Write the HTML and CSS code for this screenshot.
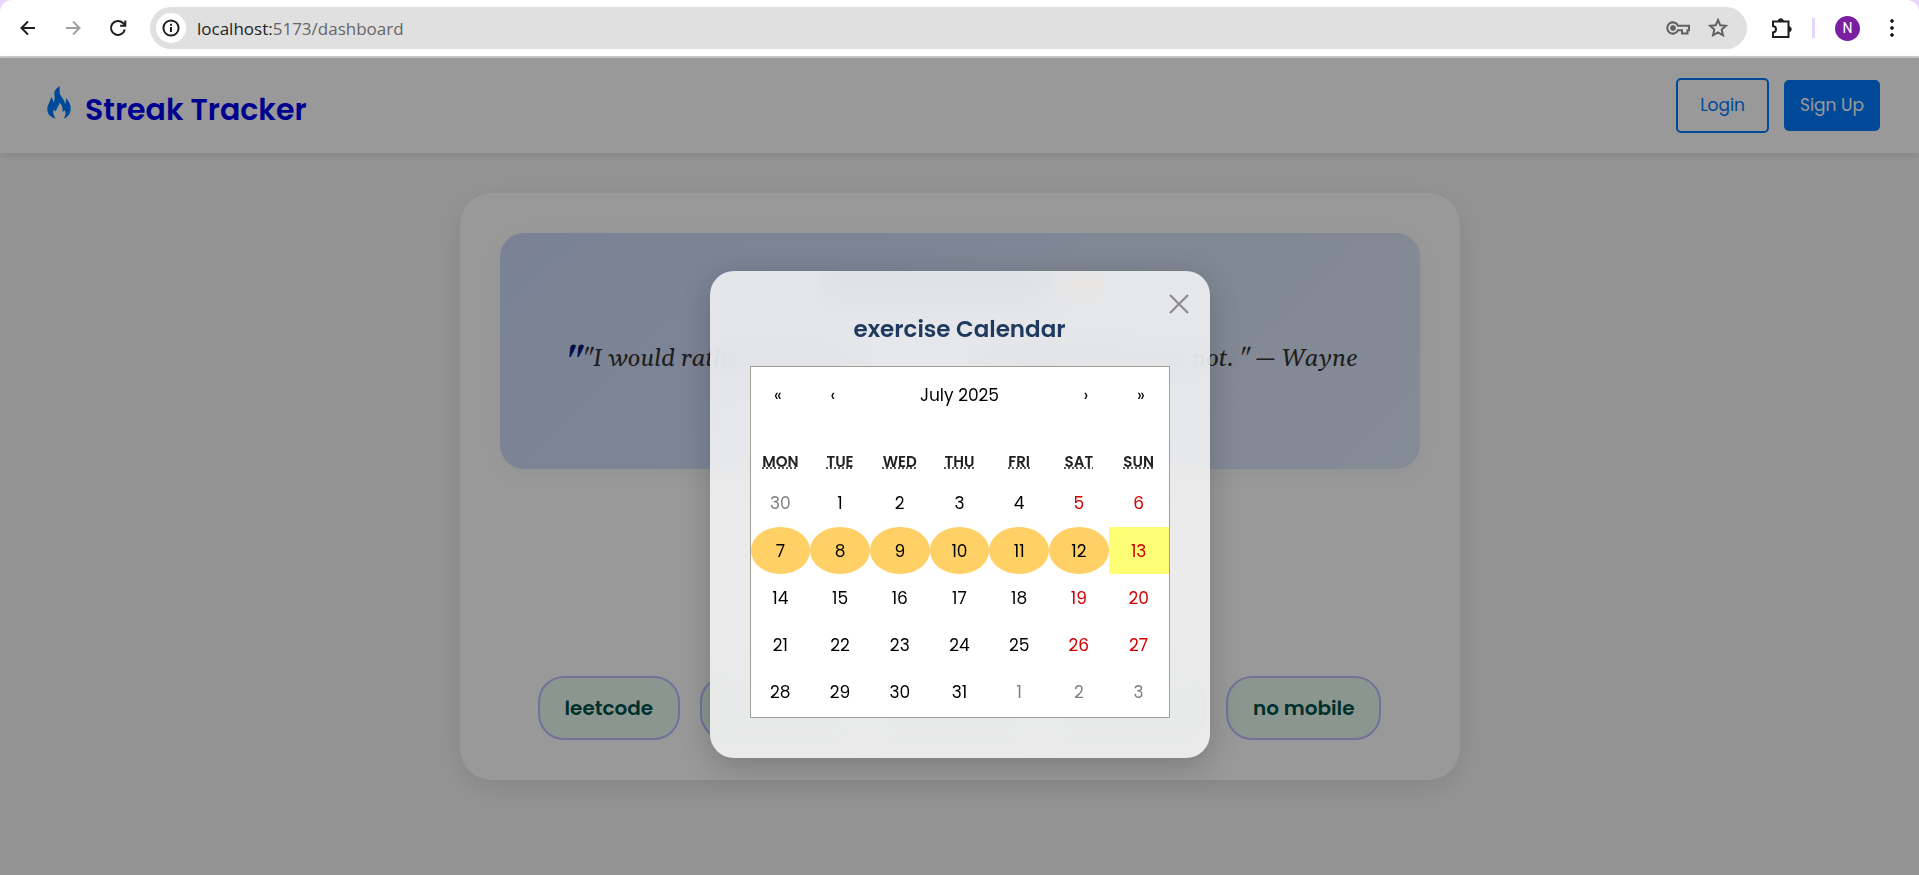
FILE: index.html
```html
<!DOCTYPE html>
<html lang="en">
<head>
<meta charset="utf-8">
<title>Streak Tracker</title>
<meta name="viewport" content="width=device-width, initial-scale=1">
<link rel="stylesheet" href="styles.css">
</head>
<body>
<div class="browser">
  <div class="toolbar">
    <div class="nav-buttons">
      <button class="tool" aria-label="Back"><svg viewBox="0 0 20 20"><path d="M17 10H4M10 3.5L3.5 10l6.500 6.500"/></svg></button>
      <button class="tool tool-off" aria-label="Forward"><svg viewBox="0 0 20 20"><path d="M3 10h13M10 3.500L16.500 10 10 16.500"/></svg></button>
      <button class="tool" aria-label="Reload"><svg viewBox="0 0 20 20"><path d="M16.800 11.500A7 7 0 1 1 15 5l2 2"/><path d="M17.300 2.500v5.200h-5.200"/></svg></button>
    </div>
    <div class="address">
      <button class="site-info" aria-label="Site information"><svg viewBox="0 0 20 20"><circle cx="10" cy="10" r="7.600"/><path d="M10 9v5M10 5.700v2"/></svg></button>
      <div class="url"><span class="host">localhost:</span>5173/dashboard</div>
      <button class="tool tool-mid key" aria-label="Passwords"><svg viewBox="0 0 24 20"><path d="M12 7.800A5.600 5.600 0 1 0 12 12.200h4V15.500h5.500V12.200h1.500V7.800z"/><circle class="solid" cx="7" cy="10" r="2.400"/></svg></button>
      <button class="tool tool-mid" aria-label="Bookmark this page"><svg viewBox="0 0 20 20"><path d="M10 2l2.300 5.300 5.700.5-4.300 3.800 1.300 5.700L10 14.300l-5 3 1.300-5.700L2 7.800l5.700-.5z"/></svg></button>
    </div>
    <div class="tools">
      <button class="tool puzzle" aria-label="Extensions"><svg viewBox="0 0 24 24"><path d="M4 5.500h15.500v15.500H4v-4.500c4-.5 4-6 0-6.500z"/><path class="solid" d="M9 5a2.800 2.800 0 0 1 5.500 0zM20 10.500a2.800 2.800 0 0 1 0 5.500z"/></svg></button>
      <span class="divider"></span>
      <button class="avatar" aria-label="Profile">N</button>
      <button class="tool menu" aria-label="Menu"><svg viewBox="0 0 20 20"><circle class="solid" cx="10" cy="3" r="1.400"/><circle class="solid" cx="10" cy="10" r="1.400"/><circle class="solid" cx="10" cy="17" r="1.400"/></svg></button>
    </div>
  </div>

  <div class="viewport">
    <header class="site-header">
      <a class="brand" href="#">
        <svg class="flame" viewBox="0 0 24 34"><path d="M12.500 0C13 5 12 7 14 10c1.500 2.200 3.500 4.500 4 8 1-1.500 1.200-3.500.8-6C22 15 24 19 23.700 23c-.3 5-3 8.500-7 9.500 2.200-3 2.300-5.500 1-8.500-.5 1-1.200 1.500-2.200 1.800.5-4-.5-7-3.300-9.300.3 3.500-2.700 5-3.200 9-1-.5-1.700-1.200-2-2.500-1.500 3.500-.8 6.500 1.800 9.500C3.500 31.500.3 28 .3 23 .2 18.500 3.500 16 4 11c1.700 1.800 2.300 3.300 2.300 5.500C9.500 12.500 6 8 8 4.500 9 2.500 11 1.500 12.500 0z"/></svg>
        <span>Streak Tracker</span>
      </a>
      <nav class="account">
        <a class="btn btn-outline" href="#">Login</a>
        <a class="btn btn-solid" href="#">Sign Up</a>
      </nav>
    </header>

    <main class="card">
      <section class="quote-box">
        <div class="quote-head"><span class="bar"></span><span class="dot"></span></div>
        <blockquote class="quote">
          <span><span class="mark">"</span>"I would rather be hated</span>
          <span>loved for who I am not. " — Wayne</span>
        </blockquote>
      </section>
      <div class="habits">
        <button class="habit">leetcode</button>
        <span class="habit habit-rest"></span>
        <span class="habit habit-rest"></span>
        <span class="habit habit-rest"></span>
        <button class="habit">no mobile</button>
      </div>
    </main>

    <div class="overlay">
      <div class="modal" role="dialog" aria-labelledby="modal-title">
        <button class="close" aria-label="Close"><svg viewBox="0 0 20 20"><path d="M1 1l18 18M19 1L1 19"/></svg></button>
        <h2 class="modal-title" id="modal-title">exercise Calendar</h2>
        <div class="calendar">
          <div class="cal-nav">
            <button>«</button><button>‹</button>
            <button class="cal-label">July 2025</button>
            <button>›</button><button>»</button>
          </div>
          <table class="cal-grid">
            <thead><tr>
              <th><abbr title="Monday">MON</abbr></th><th><abbr title="Tuesday">TUE</abbr></th><th><abbr title="Wednesday">WED</abbr></th><th><abbr title="Thursday">THU</abbr></th><th><abbr title="Friday">FRI</abbr></th><th><abbr title="Saturday">SAT</abbr></th><th><abbr title="Sunday">SUN</abbr></th>
            </tr></thead>
            <tbody>
              <tr><td><button class="out">30</button></td><td><button>1</button></td><td><button>2</button></td><td><button>3</button></td><td><button>4</button></td><td><button class="weekend">5</button></td><td><button class="weekend">6</button></td></tr>
              <tr><td><button class="done">7</button></td><td><button class="done">8</button></td><td><button class="done">9</button></td><td><button class="done">10</button></td><td><button class="done">11</button></td><td><button class="done">12</button></td><td><button class="weekend today">13</button></td></tr>
              <tr><td><button>14</button></td><td><button>15</button></td><td><button>16</button></td><td><button>17</button></td><td><button>18</button></td><td><button class="weekend">19</button></td><td><button class="weekend">20</button></td></tr>
              <tr><td><button>21</button></td><td><button>22</button></td><td><button>23</button></td><td><button>24</button></td><td><button>25</button></td><td><button class="weekend">26</button></td><td><button class="weekend">27</button></td></tr>
              <tr><td><button>28</button></td><td><button>29</button></td><td><button>30</button></td><td><button>31</button></td><td><button class="out">1</button></td><td><button class="out">2</button></td><td><button class="out">3</button></td></tr>
            </tbody>
          </table>
        </div>
      </div>
    </div>
  </div>
</div>
</body>
</html>
```
FILE: styles.css
```css
* { box-sizing: border-box; }
body { margin: 0; font-family: Poppins, Inter, sans-serif; font-size: 17px; color: #222; }
button { margin: 0; padding: 0; border: 0; background: none; font: inherit; color: inherit; cursor: pointer; }
a { text-decoration: none; }
svg { display: block; fill: none; stroke: currentColor; stroke-width: 2; }
.solid { fill: currentColor; stroke-width: 1; }

.browser { min-height: 100vh; display: flex; flex-direction: column; background: #e8d5fb; }

/* Browser toolbar */
.toolbar { display: flex; align-items: center; height: 58px; padding: 0 17px 0 18px; background: #fff; border-bottom: 2px solid #c9c9c9; border-radius: 12px 12px 0 0; color: #1f1f1f; }
.nav-buttons { display: flex; gap: 25px; margin-right: 22px; }
.tool { width: 20px; color: #1f1f1f; }
.tool-off { color: #a0a0a0; }
.tool-mid { color: #5f6063; }
.key { width: 24px; }
.address { flex: 1; display: flex; align-items: center; gap: 18px; height: 42px; padding: 0 19px 0 6px; border-radius: 21px; background: #e0e0e0; }
.site-info { width: 30px; height: 30px; padding: 5px; border-radius: 50%; background: #fff; }
.site-info + .url { margin-left: -7px; }
.url { flex: 1; font-family: "Segoe UI", "Open Sans", sans-serif; font-size: 17px; color: #666; }
.host { color: #1f1f1f; }
.tools { display: flex; align-items: center; }
.puzzle { width: 24px; margin: 0 19px 0 22px; }
.divider { width: 3px; height: 20px; background: #e8d5fb; }
.avatar { width: 25px; height: 25px; margin: 0 22px 0 20px; border-radius: 50%; background: #7b1fa2; color: #fff; font-family: Roboto, sans-serif; font-size: 14px; }

/* Page */
.viewport { position: relative; flex: 1; background: #f7f7f7; }
.site-header { display: flex; align-items: center; justify-content: space-between; height: 95px; padding: 0 39px 0 47px; background: #fff; box-shadow: 0 2px 8px rgba(0, 0, 0, .1); }
.brand { display: flex; align-items: center; gap: 14px; color: #0000ee; font-size: 30px; font-weight: 600; line-height: 40px; }
.brand span { padding-top: 8px; }
.flame { width: 24px; height: 34px; margin-bottom: 6px; fill: #007bff; stroke: none; }
.account { display: flex; align-items: center; gap: 15px; }
.btn { padding: 13px 16px; border-radius: 5px; font-size: 17px; line-height: 25px; }
.btn-outline { padding: 13px 22px; border: 2px solid #007bff; color: #007bff; }
.btn-solid { background: #007bff; color: #fff; }

.card { max-width: 1000px; margin: 40px auto; padding: 40px; border-radius: 32px; background: #fff; box-shadow: 0 8px 32px rgba(0, 0, 0, .1); }
.quote-box { min-height: 236px; padding: 40px 62px 32px 65px; border-radius: 24px; background: linear-gradient(135deg, #cbd8f9, #dee9f8); box-shadow: 0 4px 24px rgba(0, 0, 0, .04); }
.quote-head { display: flex; justify-content: center; gap: 20px; margin-bottom: 34px; }
.bar { width: 235px; height: 32px; border-radius: 8px; background: #a4b9c4; }
.dot { width: 32px; height: 32px; border-radius: 50%; background: #f0d7ae; }
.quote { display: flex; justify-content: space-between; margin: 0; font-family: Georgia, Gelasio, "Liberation Serif", serif; font-style: italic; font-size: 24px; line-height: 40px; white-space: nowrap; color: #333; }
.mark { font-size: 36px; line-height: 1px; font-weight: 700; color: #001f7a; vertical-align: -8px; }
.habits { display: flex; gap: 20px; margin-top: 207px; padding: 0 38px; }
.habit { height: 64px; padding: 0 25px; border: 2px solid #bbbfff; border-radius: 26px; background: #e9faf0; color: #00504a; font-size: 20px; font-weight: 600; }
.habit-rest { flex: 1; }

/* Modal */
.overlay { position: absolute; inset: 0; display: flex; align-items: flex-start; justify-content: center; padding-top: 213px; background: rgba(0, 0, 0, .4); }
.modal { position: relative; width: 500px; padding: 40px; border-radius: 24px; background: rgba(255, 255, 255, .8); backdrop-filter: blur(16px); box-shadow: 0 8px 32px rgba(0, 0, 0, .2); }
.close { position: absolute; top: 23px; right: 21px; width: 20px; color: #888; }
.modal-title { margin: 0 0 19px; text-align: center; font-size: 23px; line-height: 36px; font-weight: 600; color: #1f3a60; }
.calendar { padding-bottom: 2px; border: 1px solid #a0a096; background: #fff; color: #000; }
.cal-nav { display: flex; height: 55px; margin-bottom: 18px; }
.cal-nav button { width: 55px; }
.cal-nav .cal-label { flex: 1; }
.cal-grid { width: 100%; table-layout: fixed; border-collapse: collapse; }
.cal-grid th { height: 39px; padding: 4px 0 0; font-size: 15px; line-height: 20px; font-weight: 600; color: #222; }
.cal-grid abbr { text-decoration: underline dotted; }
.cal-grid td { padding: 0; }
.cal-grid td button { display: block; width: 100%; height: 47px; }
.cal-grid tr:first-child td { padding-bottom: 1px; }
.cal-grid .weekend { color: #d10000; }
.cal-grid .out { color: #808080; }
.cal-grid .done { border-radius: 50%; background: #ffd066; }
.cal-grid .today { background: #ffff76; }
```
